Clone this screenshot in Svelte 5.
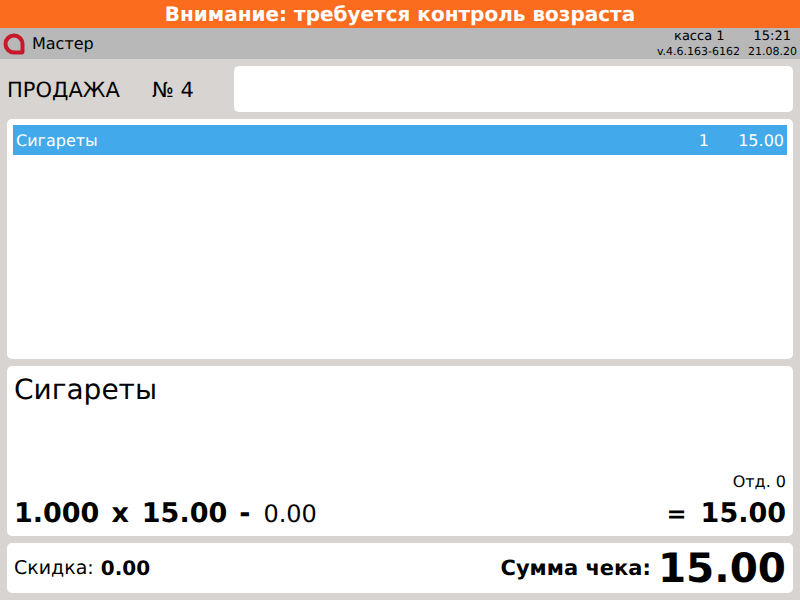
<script>
  const version = 'v.4.6.163-6162';
</script>

<div class="screen">
  <div class="alert">Внимание: требуется контроль возраста</div>
  <header class="status">
    <svg class="logo" width="22" height="22" viewBox="0 0 22 22" aria-hidden="true">
      <path d="M11 2.5a8.5 8.5 0 0 1 8.5 8.5v7.5q0 1-1 1H11a8.5 8.5 0 0 1 0-17z" fill="none" stroke="#c8192b" stroke-width="4"/>
    </svg>
    <span class="user">Мастер</span>
    <div class="info">
      <div class="info-top"><span>касса 1</span><span class="time">15:21</span></div>
      <div class="info-bottom"><span>{version}</span><span>21.08.20</span></div>
    </div>
  </header>
  <main class="body">
    <div class="title-row">
      <div class="title"><span class="sale">ПРОДАЖА</span><span>№ 4</span></div>
      <div class="card search"></div>
    </div>
    <section class="card list">
      <div class="row"><span class="name">Сигареты</span><span class="qty">1</span><span class="sum">15.00</span></div>
    </section>
    <section class="card detail">
      <div class="product">Сигареты</div>
      <div class="dept">Отд. 0</div>
      <div class="calc">
        <b>1.000</b><b class="op">x</b><b>15.00</b><b class="op">-</b><span class="disc">0.00</span>
        <b class="eq">=</b><b>15.00</b>
      </div>
    </section>
    <footer class="card totals">
      <span class="dlabel">Скидка:</span><b class="dval">0.00</b>
      <b class="tlabel">Сумма чека:</b><b class="total">15.00</b>
    </footer>
  </main>
</div>

<style>
  :global(body) { margin: 0; }
  .screen {
    width: 800px; height: 600px; overflow: hidden;
    display: flex; flex-direction: column;
    background: #d7d4d1; color: #000;
    font-family: "DejaVu Sans", sans-serif;
    text-rendering: geometricPrecision;
  }
  .alert {
    height: 28px; line-height: 29px; flex: none;
    background: #fb6c1f; color: #fff;
    text-align: center; font-size: 20px; font-weight: bold;
  }
  .status {
    height: 31px; flex: none; background: #b8b8b8;
    display: flex; align-items: center; padding: 0 3px;
  }
  .logo { flex: none; margin-right: 7px; }
  .user { font-size: 16px; }
  .info { margin-left: auto; display: flex; flex-direction: column; align-items: flex-end; }
  .info-top { display: flex; font-size: 13px; line-height: 16px; padding-right: 6px; }
  .time { margin-left: 29px; }
  .info-bottom { display: flex; gap: 8px; font-size: 11px; line-height: 14px; }
  .body {
    flex: 1; display: flex; flex-direction: column; gap: 7px;
    padding: 7px 7px 7px;
  }
  .card { background: #fff; border-radius: 5px; }
  .title-row { height: 46px; display: flex; flex: none; }
  .title { width: 227px; display: flex; align-items: center; font-size: 21px; flex: none; padding-top: 2px; box-sizing: border-box; }
  .sale { width: 145px; }
  .search { flex: 1; }
  .list { height: 240px; flex: none; padding: 6px; box-sizing: border-box; }
  .row {
    height: 30px; background: #42aaea; color: #fff;
    display: flex; align-items: center; font-size: 16px; padding: 1px 3px 0; box-sizing: border-box;
  }
  .name { flex: 1; }
  .sum { width: 75px; text-align: right; }
  .detail {
    height: 170px; flex: none; box-sizing: border-box; padding: 0 7px;
    display: flex; flex-direction: column;
  }
  .product { font-size: 28px; line-height: 30px; margin-top: 9px; }
  .dept { margin-top: auto; text-align: right; font-size: 16px; line-height: 18px; }
  .calc { display: flex; align-items: baseline; font-size: 27px; line-height: 32px; margin: 7px 0 6px; }
  .op { margin: 0 13px 0 12px; }
  .disc { font-weight: normal; font-size: 24px; margin-right: auto; }
  .eq { margin-right: 14px; font-size: 24px; }
  .totals { flex: 1; display: flex; align-items: center; padding: 0 7px; line-height: 50px; }
  .dlabel { font-size: 19px; margin-right: 7px; }
  .dval { font-size: 20px; margin-right: auto; }
  .tlabel { font-size: 21px; margin-right: 7px; }
  .total { font-size: 40.5px; }
</style>
